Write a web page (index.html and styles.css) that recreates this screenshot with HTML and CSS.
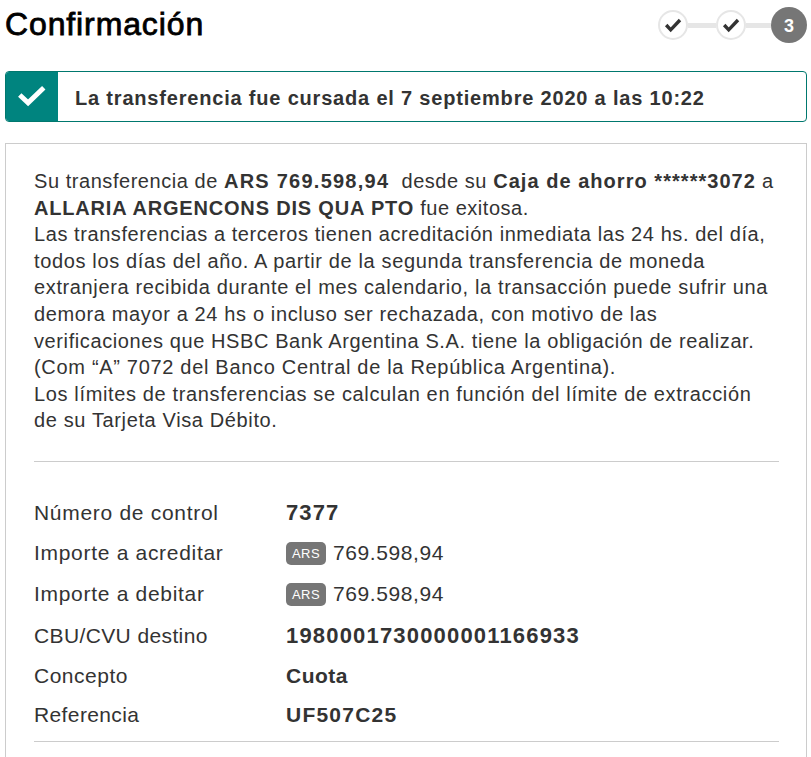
FILE: index.html
```
<!DOCTYPE html>
<html lang="es">
<head>
<meta charset="utf-8">
<title>Confirmación</title>
<link rel="stylesheet" href="styles.css">
</head>
<body>
<header class="header">
  <h1 class="title">Confirmación</h1>
  <div class="steps">
    <span class="step"><svg viewBox="0 0 30 30"><path d="M8.200 15l4.500 4.800 9.300-9.800"/></svg></span>
    <span class="bar"></span>
    <span class="step"><svg viewBox="0 0 30 30"><path d="M8.200 15l4.500 4.800 9.300-9.800"/></svg></span>
    <span class="bar bar-last"></span>
    <span class="step current">3</span>
  </div>
</header>
<div class="alert">
  <div class="alert-icon"><svg viewBox="0 0 52 50"><path d="M13.500 23.500l8.500 8 16-15.500"/></svg></div>
  <p class="alert-text">La transferencia fue cursada el 7 septiembre 2020 a las 10:22</p>
</div>
<main class="card">
  <div class="message">
    <span class="line l1">Su transferencia de <b class="sum">ARS 769.598,94</b>&nbsp; desde su <b class="account">Caja de ahorro ******3072</b> a</span>
    <span class="line l2"><b class="payee">ALLARIA ARGENCONS DIS QUA PTO</b> fue exitosa.</span>
    <span class="line l3">Las transferencias a terceros tienen acreditación inmediata las 24 hs. del día,</span>
    <span class="line l4">todos los días del año. A partir de la segunda transferencia de moneda</span>
    <span class="line l5">extranjera recibida durante el mes calendario, la transacción puede sufrir una</span>
    <span class="line l6">demora mayor a 24 hs o incluso ser rechazada, con motivo de las</span>
    <span class="line l7">verificaciones que HSBC Bank Argentina S.A. tiene la obligación de realizar.</span>
    <span class="line l8">(Com “A” 7072 del Banco Central de la República Argentina).</span>
    <span class="line l9">Los límites de transferencias se calculan en función del límite de extracción</span>
    <span class="line l10">de su Tarjeta Visa Débito.</span>
  </div>
  <dl class="details">
    <dt class="wide">Número de control</dt><dd><b class="control">7377</b></dd>
    <dt class="wide">Importe a acreditar</dt><dd><span class="badge">ARS</span><span class="amount">769.598,94</span></dd>
    <dt class="wide">Importe a debitar</dt><dd><span class="badge">ARS</span><span class="amount">769.598,94</span></dd>
    <dt class="tight">CBU/CVU destino</dt><dd><b class="cbu">1980001730000001166933</b></dd>
    <dt>Concepto</dt><dd><b>Cuota</b></dd>
    <dt class="tight">Referencia</dt><dd><b class="ref">UF507C25</b></dd>
  </dl>
</main>
</body>
</html>
```
FILE: styles.css
```
* { box-sizing: border-box; }
html { overflow: hidden; }
body { margin: 0; height: 757px; overflow: hidden; background: #fff; color: #333; font-family: "Liberation Sans", Arial, sans-serif; display: flex; flex-direction: column; padding: 0 4px 0 5px; }
svg { display: block; fill: none; }
.header { flex: none; height: 71px; display: flex; justify-content: space-between; align-items: flex-start; }
.title { margin: 0; padding-top: 4px; font-size: 32px; line-height: 40px; font-weight: 400; color: #000; -webkit-text-stroke: 0.8px #000; letter-spacing: 0.88px; }
.steps { display: flex; align-items: center; padding-top: 7px; }
.step { width: 30px; height: 30px; border: 2px solid #e6e6e6; border-radius: 50%; }
.step svg { width: 30px; height: 30px; margin: -2px; stroke: #333; stroke-width: 3.4; }
.bar { width: 28px; height: 5px; background: #e6e6e6; }
.bar-last { width: 25px; }
.current { width: 36px; height: 36px; border: 0; background: #767676; color: #fff; font-size: 18px; font-weight: 700; line-height: 38px; text-align: center; }
.alert { flex: none; height: 51px; border: 1px solid #00786e; border-radius: 4px; display: flex; overflow: hidden; }
.alert-icon { width: 52px; background: #00847f; }
.alert-icon svg { width: 52px; height: 49px; stroke: #fff; stroke-width: 5; }
.alert-text { margin: 0 0 0 17px; font-size: 20px; font-weight: 700; line-height: 52px; letter-spacing: 0.81px; white-space: nowrap; }
.card { flex: none; height: 640px; margin-top: 21px; border: 1px solid #ccc; padding: 24px 27px 0 28px; }
.message { height: 294px; border-bottom: 1px solid #ccc; font-size: 20px; line-height: 26.6px; }
.line { display: block; white-space: nowrap; letter-spacing: 0.63px; }
.l1 { letter-spacing: 0.55px; }
.sum { letter-spacing: 1.24px; }
.account { letter-spacing: 1.04px; }
.l2 { letter-spacing: 0.53px; }
.payee { letter-spacing: 0.82px; }
.l3 { letter-spacing: 0.575px; }
.l4 { letter-spacing: 0.645px; }
.l7 { letter-spacing: 0.6px; }
.l8 { letter-spacing: 0.69px; }
.l9 { letter-spacing: 0.64px; }
.details { margin: 0; padding-top: 31px; display: grid; grid-template-columns: 252px 1fr; grid-template-rows: 40px 40px 42px 41px 39px 40px; height: 280px; border-bottom: 1px solid #ccc; align-items: center; font-size: 21px; letter-spacing: 0.5px; }
.wide { letter-spacing: 0.7px; }
.tight { letter-spacing: 0.38px; }
dd { margin: 0; display: flex; align-items: center; }
.control { font-size: 22px; letter-spacing: 1.1px; }
.cbu { font-size: 22px; letter-spacing: 1.18px; }
.ref { letter-spacing: 1.22px; }
.badge { width: 40px; height: 23px; margin-right: 7px; border-radius: 5px; background: #767676; color: #fff; font-size: 13px; line-height: 24px; text-align: center; }
.amount { letter-spacing: 0.6px; }
```
